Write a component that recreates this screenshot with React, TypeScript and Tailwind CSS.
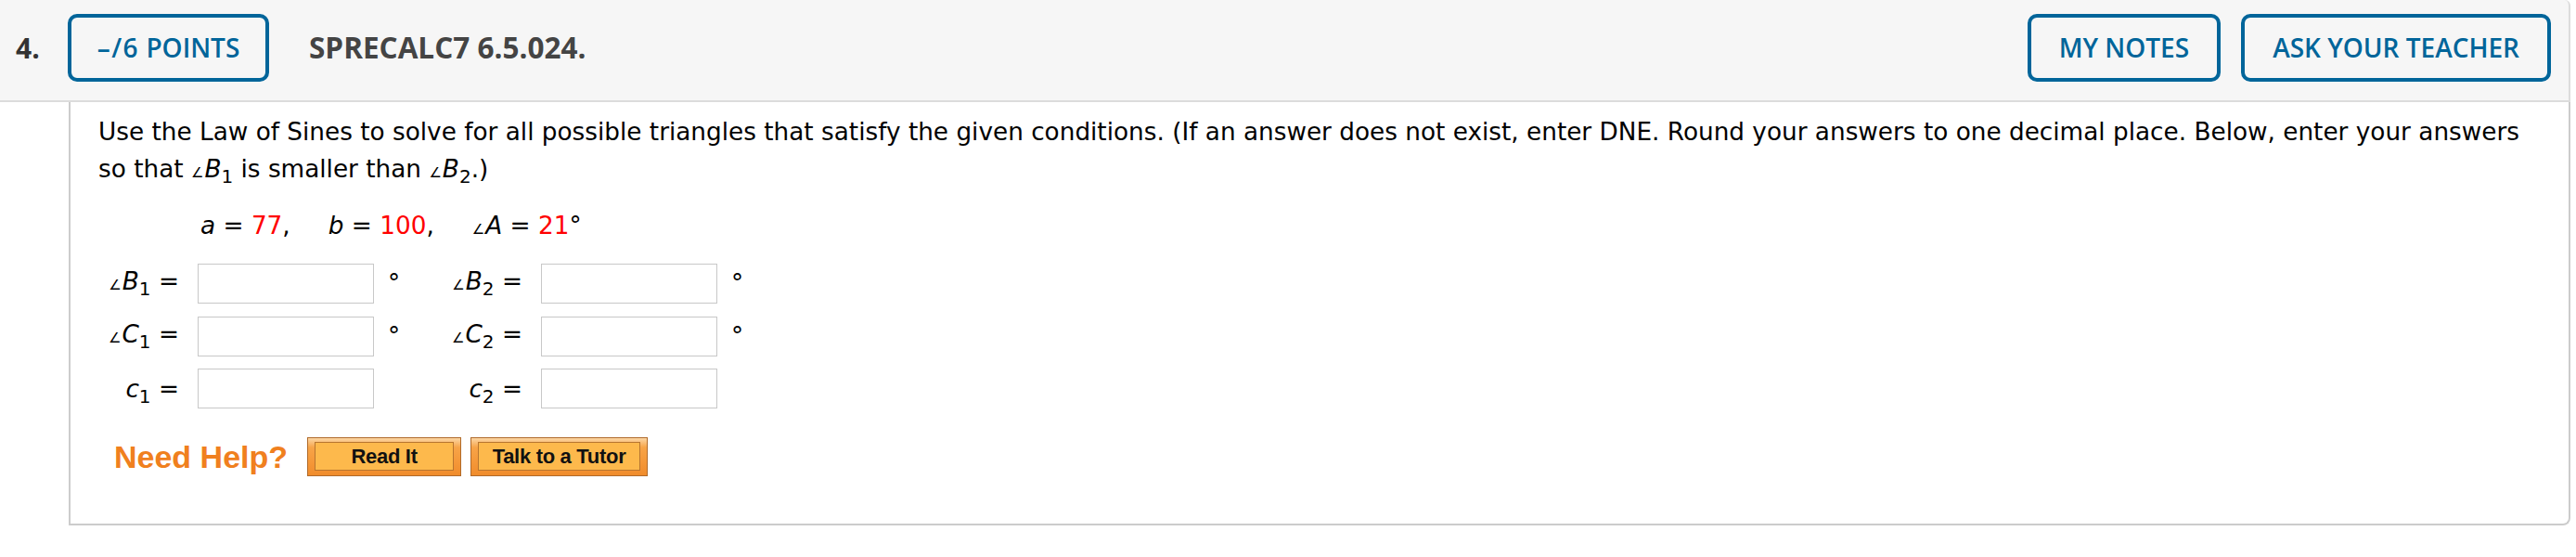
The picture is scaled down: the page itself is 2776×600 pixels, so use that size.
import type { ReactNode } from "react";

const headerFont = { fontFamily: '"Open Sans", "Liberation Sans", sans-serif' };

function OutlineButton({ children, width = "" }: { children: ReactNode; width?: string }) {
  return (
    <button
      type="button"
      className={`h-[73px] px-[30px] ${width} flex items-center justify-center border-4 border-[#00659a] rounded-[10px] text-[28px] font-semibold text-[#00659a] leading-none`}
    >
      {children}
    </button>
  );
}

function HelpButton({ label, width }: { label: string; width: string }) {
  return (
    <button
      type="button"
      className={`h-[42px] ${width} border border-[#b06a2a] bg-[linear-gradient(to_bottom,#fcd6a4_0%,#f7a448_25%,#f5993a_60%,#f08c2c_100%)] px-[7px] pt-[4px] pb-[5px]`}
    >
      <span
        className="flex h-full w-full items-center justify-center border border-[#b8752f] bg-[#fdb94c] text-[22px] font-bold text-[#111] leading-none tracking-[-0.3px]"
        style={{ fontFamily: '"Liberation Sans", Arial, sans-serif' }}
      >
        {label}
      </span>
    </button>
  );
}

function Angle() {
  return <span className="text-[15px] not-italic mr-[1px]">∠</span>;
}

// subscript that does not stretch the line box
function Sub({ n }: { n: string }) {
  return <span className="relative top-[6px] text-[20px] not-italic leading-none">{n}</span>;
}

function AnswerCell({ label, degree }: { label: ReactNode; degree: boolean }) {
  return (
    <>
      <div className="w-[87px] text-right whitespace-nowrap">{label} =</div>
      <input type="text" className="ml-5 w-[190px] h-[43px] border border-[#c8c8c8] bg-white outline-none" />
      <div className="w-[73px] pl-[15px] self-start pt-[2px]">{degree ? "°" : ""}</div>
    </>
  );
}

export default function App() {
  const rows = [
    {
      left: (
        <>
          <Angle />
          <i>B</i>
          <Sub n="1" />
        </>
      ),
      right: (
        <>
          <Angle />
          <i>B</i>
          <Sub n="2" />
        </>
      ),
      degree: true,
    },
    {
      left: (
        <>
          <Angle />
          <i>C</i>
          <Sub n="1" />
        </>
      ),
      right: (
        <>
          <Angle />
          <i>C</i>
          <Sub n="2" />
        </>
      ),
      degree: true,
    },
    {
      left: (
        <>
          <i>c</i>
          <Sub n="1" />
        </>
      ),
      right: (
        <>
          <i>c</i>
          <Sub n="2" />
        </>
      ),
      degree: false,
    },
  ];

  return (
    <div className="w-[2770px] bg-white min-h-[600px]">
      {/* question header */}
      <div
        className="flex items-center h-[110px] pb-[6px] pl-[17px] pr-[19px] bg-[#f6f6f6] border-b-2 border-r-2 border-[#dcdcdc] rounded-tr-[6px]"
        style={headerFont}
      >
        <span className="text-[30px] font-bold text-[#333] w-[56px]">4.</span>
        <OutlineButton width="w-[217px] !px-0">
          <span className="tracking-[1.5px]">–/6</span>&nbsp;POINTS
        </OutlineButton>
        <span className="ml-[43px] text-[31.5px] font-bold text-[#444]">SPRECALC7 6.5.024.</span>
        <div className="ml-auto flex gap-[22px]">
          <OutlineButton>MY NOTES</OutlineButton>
          <OutlineButton>ASK YOUR TEACHER</OutlineButton>
        </div>
      </div>

      {/* question body */}
      <div
        className="ml-[74px] border-l-2 border-r-2 border-b-2 border-[#cccccc] rounded-br-[8px] pl-[30px] pt-[12px] pb-[51px] text-[26.3px] text-black leading-[40px]"
        style={{ fontFamily: '"DejaVu Sans", Verdana, sans-serif' }}
      >
        <p className="pr-[45px]">
          Use the Law of Sines to solve for all possible triangles that satisfy the given conditions. (If an answer does
          not exist, enter DNE. Round your answers to one decimal place. Below, enter your answers so that <Angle />
          <i>B</i>
          <Sub n="1" /> is smaller than <Angle />
          <i>B</i>
          <Sub n="2" />
          .)
        </p>

        <div className="mt-[17px] ml-[110px] flex gap-[41px] whitespace-nowrap">
          <span>
            <i>a</i> = <span className="text-[#ff0000]">77</span>,
          </span>
          <span>
            <i>b</i> = <span className="text-[#ff0000]">100</span>,
          </span>
          <span>
            <Angle />
            <i>A</i> = <span className="text-[#ff0000]">21</span>°
          </span>
        </div>

        <div className="mt-[16px] flex flex-col gap-[13px]">
          {rows.map((row, i) => (
            <div key={i} className="flex items-center">
              <AnswerCell label={row.left} degree={row.degree} />
              <AnswerCell label={row.right} degree={row.degree} />
            </div>
          ))}
        </div>

        <div className="mt-[31px] ml-[17px] flex items-center">
          <span
            className="text-[34px] font-bold text-[#f0801e] leading-none mr-[21px]"
            style={{ fontFamily: '"Liberation Sans", Arial, sans-serif' }}
          >
            Need Help?
          </span>
          <HelpButton label="Read It" width="w-[166px]" />
          <div className="w-[10px]" />
          <HelpButton label="Talk to a Tutor" width="w-[191px]" />
        </div>
      </div>
    </div>
  );
}
